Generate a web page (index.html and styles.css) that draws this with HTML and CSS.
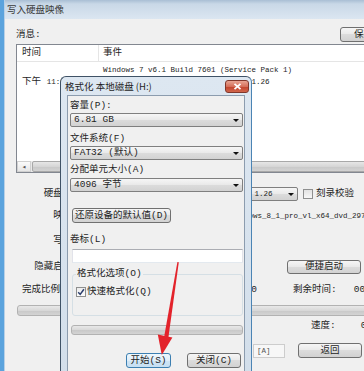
FILE: index.html
```html
<!DOCTYPE html>
<html lang="zh-CN">
<head>
    <meta charset="UTF-8">
    <meta name="viewport" content="width=device-width, initial-scale=1.0">
    <title>写入硬盘映像</title>
    <link rel="stylesheet" href="styles.css">
</head>
<body>

<div class="screen">
    <div class="frame-edge"></div>
    <div class="window">
        <div class="titlebar">写入硬盘映像</div>
        <div class="client">
            <div class="msg-head">
                <span class="msg-title">消息:</span>
                <button class="btn btn-save">保存日志</button>
            </div>

            <div class="listview">
                <div class="lv-header">
                    <div class="lv-time lv-head-cell">时间</div>
                    <div class="lv-event">事件</div>
                </div>
                <div class="lv-row lv-first">
                    <div class="lv-time"></div>
                    <div class="lv-event small">Windows 7 v6.1 Build 7601 (Service Pack 1)</div>
                </div>
                <div class="lv-row">
                    <div class="lv-time">下午 <span class="small">11:05:32</span></div>
                    <div class="lv-event small">H: [7.81GB] SanDisk Cruzer Blade 1.26</div>
                </div>
                <div class="lv-fill"></div>
                <div class="hscroll">
                    <div class="hs-btn">&#9666;</div>
                    <div class="hs-thumb"></div>
                </div>
            </div>

            <div class="field-row row-drive">
                <div class="field-label">硬盘驱动器:</div>
                <div class="combo combo-drive">
                    <span class="small drive-text">H: [7.81GB] SanDisk Cruzer Blade 1.26</span>
                    <span class="drop"></span>
                </div>
                <span class="check-box"></span>
                <span class="check-text">刻录校验</span>
            </div>

            <div class="field-row row-image">
                <div class="field-label">映像文件:</div>
                <div class="path small">D:\Software\System\Win81\cn_windows_8_1_pro_vl_x64_dvd_2971907.iso</div>
            </div>

            <div class="field-row row-mode">
                <div class="field-label">写入方式:</div>
                <div class="combo combo-mode"><span>USB-HDD+</span><span class="drop"></span></div>
            </div>

            <div class="field-row row-hidden">
                <div class="field-label">隐藏启动分区:</div>
                <div class="combo combo-hidden"><span>无</span><span class="drop"></span></div>
                <button class="btn btn-quick">便捷启动</button>
            </div>

            <div class="field-row row-stats">
                <span class="stat-done">完成比例: 0%</span>
                <span class="stat-used">已用时间: 00:00:00</span>
                <span class="stat-left">剩余时间:</span>
                <span class="stat-left-value">00:00:00</span>
            </div>

            <div class="field-row row-progress">
                <div class="progress progress-main"></div>
            </div>

            <div class="field-row row-speed">
                <span class="speed-label">速度:</span>
                <span class="speed-value">0KB/s</span>
            </div>

            <div class="field-row row-actions">
                <div class="dest-field small">[A]</div>
                <button class="btn btn-back">返回</button>
            </div>
        </div>
    </div>
</div>

<div class="dialog">
    <div class="dialog-title">
        <span>格式化 本地磁盘 (H:)</span>
        <span class="close-btn">
            <svg width="9" height="7" viewBox="0 0 9 7"><path d="M1.5 0.8 L7.5 6.2 M7.5 0.8 L1.5 6.2" stroke="#fff" stroke-width="1.8" fill="none"/></svg>
        </span>
    </div>
    <div class="dialog-body">
        <div class="dlg-label">容量(P):</div>
        <div class="combo dlg-combo combo-size"><span>6.81 GB</span><span class="drop"></span></div>

        <div class="dlg-label label-fs">文件系统(F)</div>
        <div class="combo dlg-combo combo-fs"><span>FAT32 (默认)</span><span class="drop"></span></div>

        <div class="dlg-label label-unit">分配单元大小(A)</div>
        <div class="combo dlg-combo combo-unit"><span>4096 字节</span><span class="drop"></span></div>

        <button class="btn btn-reset">还原设备的默认值(D)</button>

        <div class="dlg-label label-volume">卷标(L)</div>
        <div class="textbox"></div>

        <fieldset class="options">
            <legend>格式化选项(O)</legend>
            <div class="check-row">
                <span class="check-box checked">
                    <svg width="8" height="8" viewBox="0 0 8 8"><path d="M1.2 4.2 L3.2 6.4 L6.9 1.2" stroke="#2d3f6e" stroke-width="1.5" fill="none"/></svg>
                </span>
                <span>快速格式化(Q)</span>
            </div>
        </fieldset>

        <div class="progress dlg-progress"></div>

        <div class="dlg-buttons">
            <button class="btn btn-start">开始(S)</button>
            <button class="btn btn-close">关闭(C)</button>
        </div>
    </div>
</div>

<svg class="red-arrow" width="364" height="371" viewBox="0 0 364 371">
    <polygon points="177.4,262 178.8,262.3 168.4,337.4 164.2,336.6" fill="#e3232b"/>
    <polygon points="157.8,334.6 172.4,337.6 161.8,355" fill="#e3232b"/>
</svg>

</body>
</html>
```

FILE: styles.css
```css
* {
    box-sizing: border-box;
}

body {
    margin: 0;
    width: 364px;
    height: 371px;
    overflow: hidden;
    position: relative;
    background: #f0f0f0;
    font-family: "Liberation Mono", "Noto Sans CJK SC", monospace;
    font-size: 9.5px;
    line-height: 12px;
    color: #1e1e1e;
}

.small {
    font-size: 7.5px;
}

.screen {
    display: flex;
    height: 100%;
}

.frame-edge {
    width: 5px;
    flex-shrink: 0;
    background: #5ba3dd;
    border-right: 1px solid #b8d0e6;
}

.window {
    width: 401px;
    flex-shrink: 0;
    display: flex;
    flex-direction: column;
}

.titlebar {
    height: 19px;
    padding-left: 2px;
    line-height: 19px;
    font-family: "Noto Sans CJK SC", sans-serif;
    color: #3a3a3a;
    background: linear-gradient(#a9bed4, #c9d8e7 4px, #dbe6f1);
}

.client {
    flex: 1;
    padding-left: 11px;
    background: #f0f0f0;
}

/* message list */
.msg-head {
    display: flex;
    justify-content: space-between;
    align-items: flex-start;
    height: 17px;
    margin-top: 8px;
}

.msg-title {
    line-height: 15px;
}

.btn {
    font: inherit;
    color: #1e1e1e;
    padding: 0;
    border: 1px solid #707070;
    border-radius: 3px;
    background: linear-gradient(#f6f6f6, #e9e9e9 49%, #dcdcdc 50%, #d2d2d2);
    white-space: nowrap;
}

.btn-save {
    width: 66px;
    height: 15px;
}

.listview {
    height: 129px;
    border: 1px solid #828790;
    background: #fff;
    display: flex;
    flex-direction: column;
}

.lv-header {
    display: flex;
    height: 17px;
    flex-shrink: 0;
    border-bottom: 1px solid #e5e5e5;
}

.lv-row {
    display: flex;
    height: 12px;
    flex-shrink: 0;
    align-items: center;
}

.lv-first {
    margin-top: 2px;
}

.lv-time {
    width: 82px;
    padding-left: 5px;
    white-space: nowrap;
}

.lv-head-cell {
    display: flex;
    align-items: center;
    border-right: 1px solid #e5e5e5;
}

.lv-event {
    padding-left: 4px;
    display: flex;
    align-items: center;
    white-space: nowrap;
}

.lv-fill {
    flex: 1;
}

.hscroll {
    height: 11px;
    display: flex;
    background: #e9e9e9;
}

.hs-btn {
    width: 14px;
    font-size: 7px;
    line-height: 11px;
    text-align: center;
    color: #555;
    background: linear-gradient(#fbfbfb, #e6e6e6);
    border: 1px solid #d0d0d0;
}

.hs-thumb {
    flex: 1;
    margin-left: 1px;
    border: 1px solid #a8a8a8;
    border-radius: 2px;
    background: linear-gradient(#e6e6e6, #d6d6d6 50%, #c8c8c8 51%, #d2d2d2);
}

/* settings rows */
.field-row {
    display: flex;
    align-items: center;
    white-space: nowrap;
}

.field-label {
    width: 81px;
    text-align: right;
}

.combo {
    display: flex;
    align-items: center;
    justify-content: space-between;
    height: 14px;
    padding: 0 3px 0 3px;
    border: 1px solid #7f7f7f;
    border-radius: 2px;
    background: linear-gradient(#f6f6f6, #e9e9e9 49%, #dcdcdc 50%, #d2d2d2);
    overflow: hidden;
    white-space: nowrap;
}

.drop {
    width: 0;
    height: 0;
    flex-shrink: 0;
    border-left: 3px solid transparent;
    border-right: 3px solid transparent;
    border-top: 3px solid #111;
}

.row-drive {
    margin-top: 14px;
    height: 14px;
}

.combo-drive {
    width: 198px;
    margin-left: 3px;
}

.drive-text {
    padding-left: 2px;
}

.check-box {
    width: 10px;
    height: 10px;
    flex-shrink: 0;
    margin-left: 5px;
    border: 1px solid #8e8f8f;
    background: linear-gradient(#e2e2e2, #f7f7f7);
    display: flex;
    align-items: center;
    justify-content: center;
}

.check-text {
    margin-left: 3px;
}

.row-image {
    margin-top: 8px;
    height: 14px;
}

.path {
    margin-left: 3px;
    padding-left: 4.5px;
}

.row-mode {
    margin-top: 11px;
    height: 14px;
}

.combo-mode {
    width: 120px;
    margin-left: 3px;
}

.row-hidden {
    margin-top: 12px;
    height: 14px;
}

.combo-hidden {
    width: 100px;
    margin-left: 3px;
}

.btn-quick {
    width: 74px;
    height: 14px;
    margin-left: 87px;
}

.row-stats {
    margin-top: 9px;
    height: 13px;
    padding-left: 6px;
}

.stat-done {
    width: 116px;
}

.stat-used {
    width: 119px;
    text-align: right;
}

.stat-left {
    margin-left: 36px;
}

.stat-left-value {
    margin-left: 17px;
}

.row-progress {
    margin-top: 9px;
}

.progress {
    border: 1px solid #b2b2b2;
    border-radius: 3px;
    background: linear-gradient(#e8e8e8, #d8d8d8 50%, #c8c8c8 51%, #d4d4d4);
}

.progress-main {
    flex: 1;
    height: 11px;
    margin-left: 1px;
}

.row-speed {
    margin-top: 4px;
    height: 12px;
}

.speed-label {
    margin-left: 295px;
}

.speed-value {
    margin-left: 25px;
}

.row-actions {
    margin-top: 11px;
    height: 15px;
}

.dest-field {
    width: 32px;
    height: 14px;
    margin-left: 237px;
    padding-left: 3px;
    line-height: 12px;
    border: 1px solid #cdcdcd;
    background: #f7f7f7;
    color: #555;
}

.btn-back {
    width: 64px;
    height: 15px;
    margin-left: 13px;
}

/* format dialog */
.dialog {
    position: absolute;
    left: 60px;
    top: 76px;
    width: 192px;
    height: 320px;
    border: 1px solid #3f5266;
    border-right-color: #4b84b4;
    border-radius: 6px 6px 0 0;
    background: linear-gradient(#dde7f1, #d2deea);
}

.dialog-title {
    display: flex;
    align-items: center;
    justify-content: space-between;
    height: 18px;
    padding: 0 2px 0 4px;
    font-family: "Noto Sans CJK SC", sans-serif;
    color: #1e1e1e;
}

.close-btn {
    width: 24px;
    height: 13px;
    display: flex;
    align-items: center;
    justify-content: center;
    border: 1px solid #80372b;
    border-radius: 3px;
    background: linear-gradient(#e9a593, #d5705b 50%, #c2432c 51%, #d0654b);
}

.dialog-body {
    margin: 0 6px;
    height: 300px;
    padding: 4px 1px 0 2px;
    border: 1px solid #8c9cae;
    background: #f0f0f0;
}

.dlg-label {
    height: 12px;
    white-space: nowrap;
}

.dlg-combo {
    width: 173px;
    padding-left: 3px;
}

.combo-size {
    margin-top: 1px;
}

.label-fs {
    margin-top: 6px;
}

.combo-fs {
    margin-top: 1px;
}

.label-unit {
    margin-top: 4px;
}

.combo-unit {
    margin-top: 2px;
}

.btn-reset {
    display: block;
    width: 99px;
    height: 15px;
    margin: 16px 0 0 2px;
}

.label-volume {
    margin-top: 11px;
}

.textbox {
    width: 171px;
    height: 14px;
    margin: 3px 0 0 2px;
    border: 1px solid #abadb3;
    border-left-color: #e2e3ea;
    border-right-color: #e2e3ea;
    border-bottom-color: #e3e9ef;
    background: #fff;
}

.options {
    width: 171px;
    margin: 5px 0 0 2px;
    padding: 7px 3px 18px 3px;
    border: 1px solid #d5dfe5;
    border-radius: 3px;
    min-inline-size: 0;
}

.options legend {
    padding: 0 1px;
    height: 12px;
    line-height: 12px;
}

.check-row {
    display: flex;
    align-items: center;
    height: 10px;
}

.check-row .check-box {
    margin-left: 0;
    margin-right: 1px;
    border-color: #8e8f8f;
    background: linear-gradient(#ececec, #fdfdfd);
}

.dlg-progress {
    width: 172px;
    height: 10px;
    margin: 9px 0 0 1px;
}

.dlg-buttons {
    display: flex;
    margin-top: 18px;
}

.btn-start {
    width: 45px;
    height: 15px;
    margin-left: 56px;
    border-color: #3c7fb1;
    background: linear-gradient(#eef7fd, #dfeef9 50%, #cfe5f5 51%, #c6dff2);
}

.btn-close {
    width: 54px;
    height: 15px;
    margin-left: 16px;
}

.red-arrow {
    position: absolute;
    left: 0;
    top: 0;
    pointer-events: none;
}
```
